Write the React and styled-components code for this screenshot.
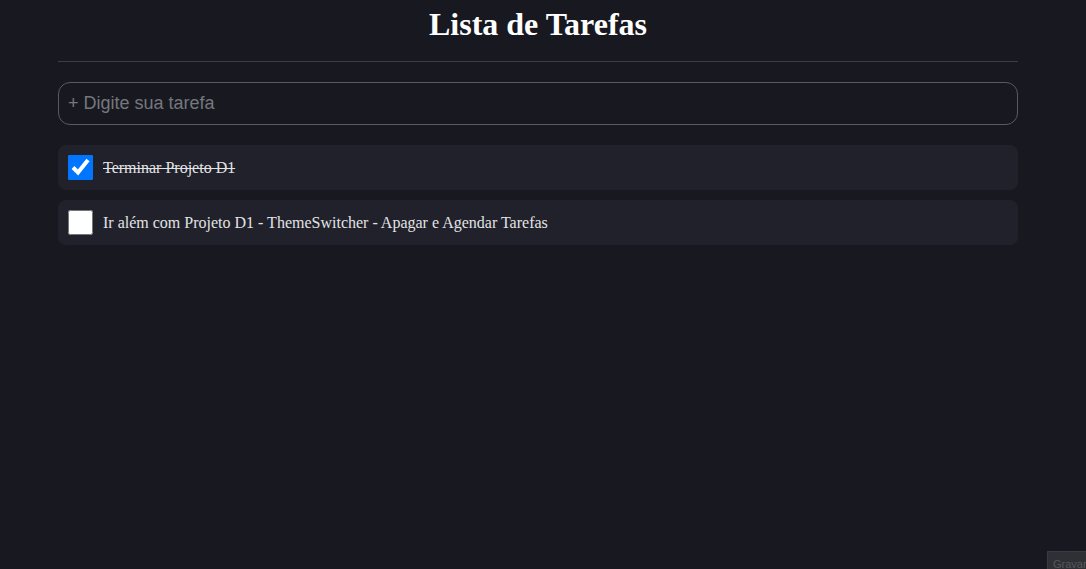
import React, { useState } from 'react';
import styled, { createGlobalStyle } from 'styled-components';

const Global = createGlobalStyle`
    html, body {
        margin: 0;
        padding: 0;
        background: #181920;
        color: #fff;
        font-family: "Liberation Serif", "Times New Roman", serif;
    }
`

const Page = styled.div`
    min-height: 100vh;
    box-sizing: border-box;
    padding: 0 68px 0 58px;
`

const Container = styled.div`
    width: 960px;
    display: flex;
    flex-direction: column;
`

const Title = styled.h1`
    margin: 6px 0 0;
    font-size: 32px;
    font-weight: bold;
    text-align: center;
    color: #fff;
`

const Divider = styled.hr`
    width: 100%;
    margin: 18px 0 20px;
    border: none;
    border-top: 1px solid #3d3e45;
`

const Input = styled.input`
    box-sizing: border-box;
    height: 43px;
    width: 100%;
    padding: 0 9px;
    background: #181920;
    border: 1px solid #5a5b60;
    border-radius: 12px;
    color: #ddd;
    font-family: "Liberation Sans", Arial, sans-serif;
    font-size: 18px;
    outline: none;

    &::placeholder {
        color: #76777d;
    }
`

const List = styled.ul`
    list-style: none;
    margin: 20px 0 0;
    padding: 0;
    display: flex;
    flex-direction: column;
    gap: 10px;
`

const Task = styled.li`
    height: 45px;
    display: flex;
    align-items: center;
    gap: 10px;
    padding: 0 10px;
    background: #20212a;
    border-radius: 8px;
`

const Check = styled.input`
    width: 25px;
    height: 25px;
    margin: 0;
    accent-color: #0075ff;
`

const Label = styled.span`
    font-size: 16px;
    color: #e3e3e6;
    text-decoration: ${p => p.$done ? 'line-through' : 'none'};
`

const Recorder = styled.div`
    position: fixed;
    right: 0;
    bottom: 0;
    width: 33px;
    height: 11px;
    background: #2f3036;
    border: 1px solid #3a3b40;
    border-right: none;
    border-bottom: none;
    overflow: hidden;
    color: #56575c;
    font-family: "Liberation Sans", Arial, sans-serif;
    font-size: 11px;
    line-height: 13px;
    padding: 6px 0 0 5px;
    white-space: nowrap;
`

const initial = [
    { id: 1, title: 'Terminar Projeto D1', done: true },
    { id: 2, title: 'Ir além com Projeto D1 - ThemeSwitcher - Apagar e Agendar Tarefas', done: false },
]

export default function App() {
    const [tasks, setTasks] = useState(initial)
    const toggle = id => setTasks(tasks.map(t => t.id === id ? { ...t, done: !t.done } : t))

    return (
        <Page>
            <Global />
            <Container>
                <Title>Lista de Tarefas</Title>
                <Divider />
                <Input placeholder="+ Digite sua tarefa" />
                <List>
                    {tasks.map(t => (
                        <Task key={t.id}>
                            <Check type="checkbox" checked={t.done} onChange={() => toggle(t.id)} />
                            <Label $done={t.done}>{t.title}</Label>
                        </Task>
                    ))}
                </List>
            </Container>
            <Recorder>Gravar</Recorder>
        </Page>
    )
}
